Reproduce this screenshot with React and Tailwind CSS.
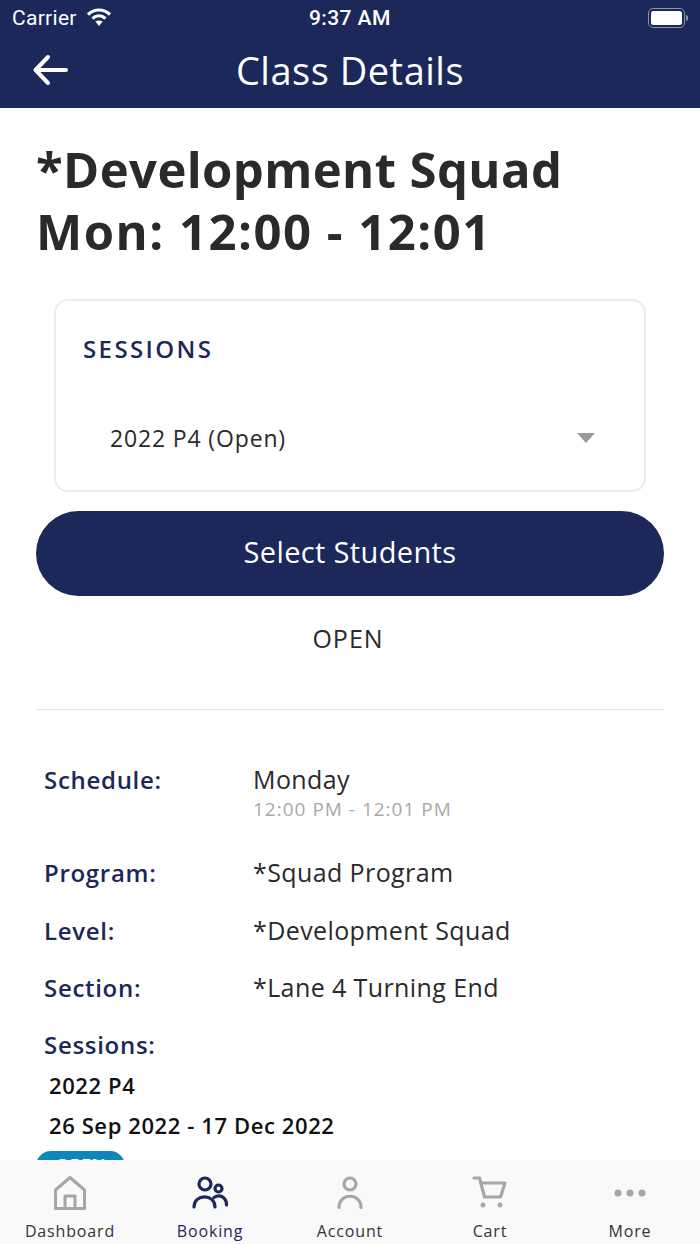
import React from "react";

const navy = "#1b2859";

function Row({ label, value, sub }) {
  return (
    <div className="flex items-start">
      <div className="w-[217px] pl-[8px] text-[24px] leading-[30px] font-semibold tracking-[0.7px] text-[#1b2859]">{label}</div>
      <div>
        <div className="text-[25px] leading-[30px] tracking-[0.4px] mt-[-1px] text-[#2a2a2a]">{value}</div>
        {sub && <div className="text-[19px] leading-[22px] mt-[4px] tracking-[1px] text-[#a9a9a9]">{sub}</div>}
      </div>
    </div>
  );
}

function Tab({ label, active, children }) {
  return (
    <div className="flex flex-1 flex-col items-center">
      <div className="h-[44px] flex items-center justify-center translate-y-[1px]">{children}</div>
      <div className={"text-[16px] leading-[20px] mt-[7px] tracking-[0.85px] " + (active ? "text-[#1b2859]" : "text-[#333333]")}>{label}</div>
    </div>
  );
}

export default function App() {
  return (
    <div className="w-[700px] h-[1244px] bg-white flex flex-col overflow-hidden font-['Open_Sans','Liberation_Sans',sans-serif]">
      <div className="bg-[#1b2859] h-[108px] shrink-0 text-white">
        <div className="h-[36px] flex items-center justify-between px-[12px] relative">
          <div className="flex items-center gap-[9px]">
            <span className="text-[21px] leading-none tracking-[0.3px] font-['Roboto',sans-serif]">Carrier</span>
            <svg width="26" height="20" viewBox="0 0 26 20" fill="none" stroke="white" strokeWidth="3.2" className="mt-[-3px]">
              <path d="M2 7.500C8.500 1.500 17.500 1.500 24 7.500" />
              <path d="M6.500 11.500C10.500 8 15.500 8 19.500 11.500" />
              <path d="M13 19l-3.600-4.400c2.200-1.500 5-1.500 7.200 0z" fill="white" stroke="none" />
            </svg>
          </div>
          <span className="absolute left-[309px] text-[21px] leading-none tracking-[0.4px] font-['Roboto',sans-serif] font-medium">9:37 AM</span>
          <div className="flex items-center">
            <div className="w-[37px] h-[20px] rounded-[5px] border-[1.5px] border-[#8a90a8] p-[2px]">
              <div className="w-full h-full rounded-[2.5px] bg-white" />
            </div>
            <div className="w-[2px] h-[6px] rounded-r bg-[#8a90a8] ml-[1px]" />
          </div>
        </div>
        <div className="h-[70px] relative flex items-center justify-center">
          <svg width="38" height="32" viewBox="0 0 38 32" fill="none" stroke="white" strokeWidth="4" strokeLinecap="round" strokeLinejoin="round" className="absolute left-[32px] top-[18px]">
            <path d="M34 16H4" />
            <path d="M16 3L3.500 16L16 29" />
          </svg>
          <div className="text-[38px] leading-[44px] mt-[-3px] tracking-[0.5px]">Class Details</div>
        </div>
      </div>

      <div className="flex-1 min-h-0 overflow-hidden px-[36px]">
        <h1 className="mt-[30px] text-[49px] leading-[62px] font-bold text-[#2a2a2a]">
          <span className="tracking-[0.4px]">*Development Squad</span>
          <br />
          <span className="tracking-[1.5px]">Mon: 12:00 - 12:01</span>
        </h1>

        <div className="mt-[37px] mx-[18px] h-[193px] border-2 border-[#ececec] rounded-[14px] px-[27px] pt-[33px] relative">
          <div className="text-[24px] leading-[30px] font-semibold tracking-[2.4px] text-[#1b2859]">SESSIONS</div>
          <div className="mt-[59px] pl-[27px] pr-[22px] flex items-center justify-between">
            <span className="text-[23px] leading-[30px] tracking-[0.85px] text-[#2a2a2a]">2022 P4 (Open)</span>
            <svg width="18" height="10" viewBox="0 0 18 10"><path d="M0 0h18L9 10z" fill="#9a9a9a" /></svg>
          </div>
        </div>

        <div className="mt-[19px] h-[85px] pb-[3px] rounded-full bg-[#1b2859] flex items-center justify-center text-white text-[29px] tracking-[0.35px]">
          Select Students
        </div>

        <div className="mt-[26px] text-center pr-[4px] text-[25px] leading-[32px] tracking-[1px] text-[#2a2a2a]">OPEN</div>

        <div className="mt-[55px] border-t border-[#e4e4e4]" />

        <div className="mt-[55px]">
          <Row label="Schedule:" value="Monday" sub="12:00 PM - 12:01 PM" />
          <div className="mt-[38px]"><Row label="Program:" value="*Squad Program" /></div>
          <div className="mt-[28px]"><Row label="Level:" value="*Development Squad" /></div>
          <div className="mt-[27px]"><Row label="Section:" value="*Lane 4 Turning End" /></div>
          <div className="mt-[27px] pl-[8px] text-[24px] leading-[30px] font-semibold tracking-[0.7px] text-[#1b2859]">Sessions:</div>
          <div className="mt-[10px] pl-[13px] text-[22px] leading-[30px] font-semibold tracking-[0.6px] text-[#111111]">2022 P4</div>
          <div className="mt-[10px] pl-[13px] text-[22px] leading-[30px] font-semibold tracking-[0.6px] text-[#111111]">26 Sep 2022 - 17 Dec 2022</div>
          <div className="mt-[11px] w-[89px] h-[30px] rounded-full bg-[#0b87bd] text-white text-[18px] font-bold text-center leading-[28px]">OPEN</div>
        </div>
      </div>

      <div className="h-[84px] shrink-0 bg-[#f9f9f9] flex pt-[10px] relative">
        <Tab label="Dashboard">
          <svg width="34" height="36" viewBox="0 0 34 36" fill="none" stroke="#a6a6a6" strokeWidth="3" strokeLinejoin="round">
            <path d="M2.500 15L17 2.500L31.500 15V33.500H2.500Z" />
            <path d="M12 33.500V21H22V33.500" />
          </svg>
        </Tab>
        <Tab label="Booking" active>
          <svg width="36" height="34" viewBox="0 0 36 34" fill="none" stroke={navy} strokeWidth="3.200" strokeLinecap="round">
            <circle cx="13" cy="8" r="6" />
            <circle cx="26.500" cy="12.500" r="3.500" />
            <path d="M2 31C2 17.500 23 17.500 23 31" />
            <path d="M22 21.500C28 17.500 34.500 21.500 34.500 29" />
          </svg>
        </Tab>
        <Tab label="Account">
          <svg width="26" height="34" viewBox="0 0 26 34" fill="none" stroke="#a6a6a6" strokeWidth="3.200" strokeLinecap="round">
            <circle cx="13" cy="8" r="6" />
            <path d="M2 31.500C2 16.500 24 16.500 24 31.500" />
          </svg>
        </Tab>
        <Tab label="Cart">
          <svg width="36" height="34" viewBox="0 0 36 34" fill="none" stroke="#a6a6a6" strokeWidth="3.200" strokeLinecap="round" strokeLinejoin="round">
            <path d="M2 2H7.500L12.500 21H28.500L33 7H9" />
            <circle cx="11" cy="29" r="2.500" fill="#a6a6a6" stroke="none" />
            <circle cx="28" cy="29" r="2.500" fill="#a6a6a6" stroke="none" />
          </svg>
        </Tab>
        <Tab label="More">
          <svg width="32" height="8" viewBox="0 0 32 8" fill="#a6a6a6">
            <circle cx="4" cy="4" r="3.500" />
            <circle cx="16" cy="4" r="3.500" />
            <circle cx="28" cy="4" r="3.500" />
          </svg>
        </Tab>
      </div>
    </div>
  );
}
